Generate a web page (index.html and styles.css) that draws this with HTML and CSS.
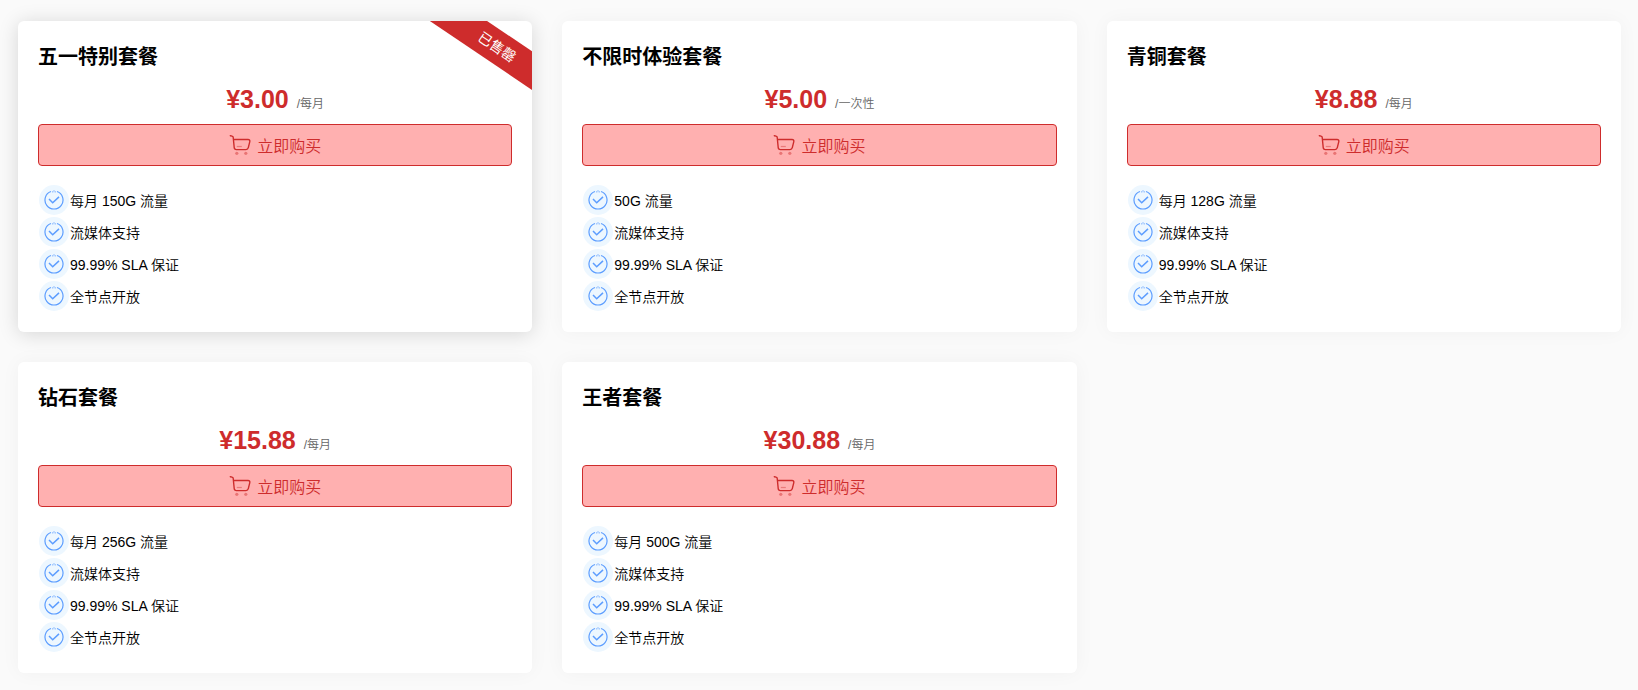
FILE: index.html
```
<!DOCTYPE html>
<html lang="zh-CN">
<head>
    <meta charset="UTF-8">
    <meta name="viewport" content="width=device-width, initial-scale=1.0">
    <title>套餐</title>
    <link rel="stylesheet" href="styles.css">
</head>
<body>

<!-- shared icons -->
<svg class="icon-defs" aria-hidden="true">
    <symbol id="icon-cart" viewBox="0 0 22 22">
        <path d="M1.300 1.700l1.800.4c.6.100 1 .5 1.100 1.200l1 10.200c.1 1.300.9 2.100 2.200 2.100h9.600c1.200 0 2-.7 2.300-1.900l1.500-6.100c.3-1.300-.5-2.100-1.800-2.100H4.600" fill="none" stroke="currentColor" stroke-width="1.400" stroke-linecap="round" stroke-linejoin="round"/>
        <path d="M7.800 12.500h5" stroke="currentColor" stroke-width="1.200" opacity=".4"/>
        <circle cx="7.800" cy="19.300" r="1.600" fill="currentColor" opacity=".45"/>
        <circle cx="16.800" cy="19.300" r="1.600" fill="currentColor" opacity=".45"/>
    </symbol>
    <symbol id="icon-check" viewBox="0 0 20 20">
        <path d="M13 1.500A9 9 0 1 1 7 1.500M8.400 1.900l.8-.1M10.800 1.800l.8.1M9.600 .9h.8" fill="none" stroke="currentColor" stroke-width="1.200"/>
        <path d="M5 9l3.700 3.700L15 6.900" fill="none" stroke="currentColor" stroke-width="1.500"/>
    </symbol>
</svg>

<div class="plans">
    <div class="plan active">
        <span class="ribbon">已售罄</span>
        <h2>五一特别套餐</h2>
        <p class="price"><strong>¥3.00</strong><span>/每月</span></p>
        <button type="button" class="buy-btn"><svg><use href="#icon-cart"/></svg>立即购买</button>
        <ul class="features">
            <li><i><svg><use href="#icon-check"/></svg></i>每月 150G 流量</li>
            <li><i><svg><use href="#icon-check"/></svg></i>流媒体支持</li>
            <li><i><svg><use href="#icon-check"/></svg></i>99.99% SLA 保证</li>
            <li><i><svg><use href="#icon-check"/></svg></i>全节点开放</li>
        </ul>
    </div>

    <div class="plan">
        <h2>不限时体验套餐</h2>
        <p class="price"><strong>¥5.00</strong><span>/一次性</span></p>
        <button type="button" class="buy-btn"><svg><use href="#icon-cart"/></svg>立即购买</button>
        <ul class="features">
            <li><i><svg><use href="#icon-check"/></svg></i>50G 流量</li>
            <li><i><svg><use href="#icon-check"/></svg></i>流媒体支持</li>
            <li><i><svg><use href="#icon-check"/></svg></i>99.99% SLA 保证</li>
            <li><i><svg><use href="#icon-check"/></svg></i>全节点开放</li>
        </ul>
    </div>

    <div class="plan">
        <h2>青铜套餐</h2>
        <p class="price"><strong>¥8.88</strong><span>/每月</span></p>
        <button type="button" class="buy-btn"><svg><use href="#icon-cart"/></svg>立即购买</button>
        <ul class="features">
            <li><i><svg><use href="#icon-check"/></svg></i>每月 128G 流量</li>
            <li><i><svg><use href="#icon-check"/></svg></i>流媒体支持</li>
            <li><i><svg><use href="#icon-check"/></svg></i>99.99% SLA 保证</li>
            <li><i><svg><use href="#icon-check"/></svg></i>全节点开放</li>
        </ul>
    </div>

    <div class="plan">
        <h2>钻石套餐</h2>
        <p class="price"><strong>¥15.88</strong><span>/每月</span></p>
        <button type="button" class="buy-btn"><svg><use href="#icon-cart"/></svg>立即购买</button>
        <ul class="features">
            <li><i><svg><use href="#icon-check"/></svg></i>每月 256G 流量</li>
            <li><i><svg><use href="#icon-check"/></svg></i>流媒体支持</li>
            <li><i><svg><use href="#icon-check"/></svg></i>99.99% SLA 保证</li>
            <li><i><svg><use href="#icon-check"/></svg></i>全节点开放</li>
        </ul>
    </div>

    <div class="plan">
        <h2>王者套餐</h2>
        <p class="price"><strong>¥30.88</strong><span>/每月</span></p>
        <button type="button" class="buy-btn"><svg><use href="#icon-cart"/></svg>立即购买</button>
        <ul class="features">
            <li><i><svg><use href="#icon-check"/></svg></i>每月 500G 流量</li>
            <li><i><svg><use href="#icon-check"/></svg></i>流媒体支持</li>
            <li><i><svg><use href="#icon-check"/></svg></i>99.99% SLA 保证</li>
            <li><i><svg><use href="#icon-check"/></svg></i>全节点开放</li>
        </ul>
    </div>
</div>

</body>
</html>
```
FILE: styles.css
```
* {
    box-sizing: border-box;
}
body {
    margin: 0;
    background-color: #fafafa;
    color: #000;
    font-family: "Liberation Sans", "Noto Sans CJK SC", sans-serif;
    font-size: 14px;
    font-weight: 350;
}
.icon-defs {
    display: none;
}
.plans {
    display: grid;
    grid-template-columns: repeat(3, 1fr);
    gap: 30px;
    padding: 21px 17px 16px 18px;
}
.plan {
    position: relative;
    overflow: hidden;
    padding: 20px;
    background: #fff;
    border-radius: 6px;
    box-shadow: 0 0 20px rgba(0, 0, 0, 0.04);
}
.plan.active {
    box-shadow: 0 2px 20px rgba(0, 0, 0, 0.15);
}
.plan h2 {
    margin: 0;
    font-size: 20px;
    line-height: 32px;
}
.ribbon {
    position: absolute;
    top: 10px;
    right: -45px;
    width: 160px;
    line-height: 32px;
    background: #ce2c2c;
    color: #fff;
    font-weight: 400;
    text-align: center;
    transform: rotate(34deg);
}
.price {
    display: flex;
    justify-content: center;
    align-items: baseline;
    gap: 8px;
    margin: 11px 0 10px;
    color: #ce2c2c;
    line-height: 30px;
}
.price strong {
    font-size: 25px;
    font-weight: 700;
}
.price span {
    color: #666;
    font-size: 12px;
    line-height: 12px;
}
.buy-btn {
    display: flex;
    justify-content: center;
    align-items: center;
    gap: 6px;
    width: 100%;
    height: 42px;
    border: 1px solid #ce2c2c;
    border-radius: 4px;
    background: #ffb0b0;
    color: #ce2c2c;
    font: inherit;
    font-size: 16px;
    cursor: pointer;
}
.buy-btn svg {
    width: 22px;
    height: 22px;
}
.features {
    margin: 18px 0 0;
    padding: 0;
    list-style: none;
}
.features li {
    display: flex;
    align-items: center;
    height: 32px;
}
.features i {
    display: flex;
    justify-content: center;
    align-items: center;
    width: 30px;
    height: 30px;
    margin: 0 1px;
    border-radius: 50%;
    background: #edf7ff;
    color: #5c9dff;
}
.features svg {
    width: 20px;
    height: 20px;
}
```
